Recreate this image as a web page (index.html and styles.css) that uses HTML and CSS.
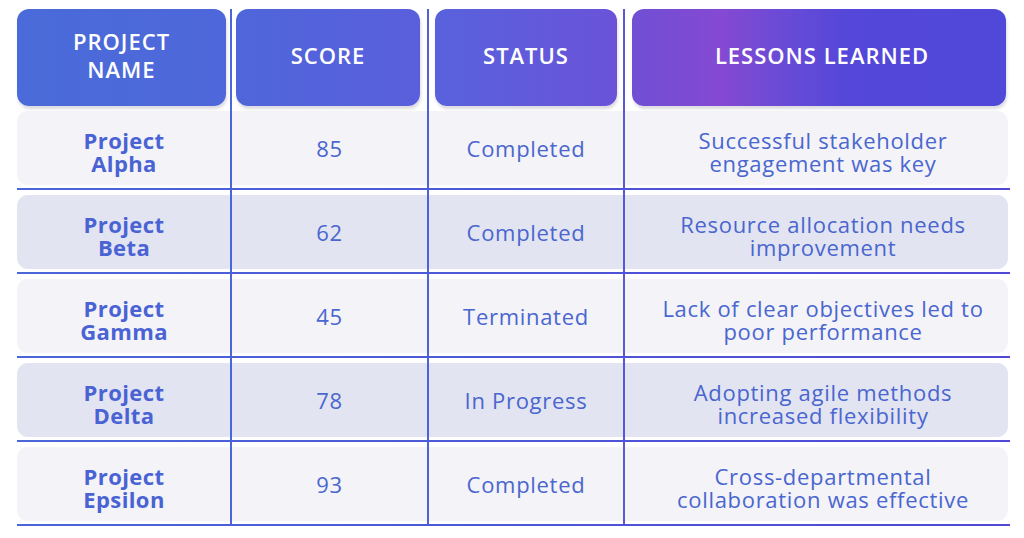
FILE: index.html
```html
<!DOCTYPE html>
<html lang="en">
<head>
<meta charset="utf-8">
<title>Project Lessons</title>
<link rel="stylesheet" href="styles.css">
</head>
<body>
<div class="table">
  <div class="head">
    <div class="hcell h1">PROJECT<br>NAME</div>
    <div class="hcell h2">SCORE</div>
    <div class="hcell h3">STATUS</div>
    <div class="hcell h4">LESSONS LEARNED</div>
  </div>
  <div class="row">
    <div class="band odd">
      <div class="cell name two">Project<br>Alpha</div>
      <div class="cell">85</div>
      <div class="cell">Completed</div>
      <div class="cell lesson two">Successful stakeholder<br>engagement was key</div>
    </div>
  </div>
  <div class="row">
    <div class="band even">
      <div class="cell name two">Project<br>Beta</div>
      <div class="cell">62</div>
      <div class="cell">Completed</div>
      <div class="cell lesson two">Resource allocation needs<br>improvement</div>
    </div>
  </div>
  <div class="row">
    <div class="band odd">
      <div class="cell name two">Project<br>Gamma</div>
      <div class="cell">45</div>
      <div class="cell">Terminated</div>
      <div class="cell lesson two">Lack of clear objectives led to<br>poor performance</div>
    </div>
  </div>
  <div class="row">
    <div class="band even">
      <div class="cell name two">Project<br>Delta</div>
      <div class="cell">78</div>
      <div class="cell">In Progress</div>
      <div class="cell lesson two">Adopting agile methods<br>increased flexibility</div>
    </div>
  </div>
  <div class="row">
    <div class="band odd">
      <div class="cell name two">Project<br>Epsilon</div>
      <div class="cell">93</div>
      <div class="cell">Completed</div>
      <div class="cell lesson two">Cross-departmental<br>collaboration was effective</div>
    </div>
  </div>
</div>
</body>
</html>
```

FILE: styles.css
```css
html, body {
  margin: 0;
  padding: 0;
  background: #ffffff;
}

body {
  font-family: "Open Sans", "DejaVu Sans", sans-serif;
}

.table {
  width: 993px;
  margin: 9px 0 0 17px;
  background-image:
    linear-gradient(90deg, transparent 213px, #4a66d8 213px, #4a66d8 215px, transparent 215px),
    linear-gradient(90deg, transparent 410px, #4f60d8 410px, #4f60d8 412px, transparent 412px),
    linear-gradient(90deg, transparent 606px, #5a56d8 606px, #5a56d8 608px, transparent 608px);
}

.head {
  display: grid;
  grid-template-columns: 214px 197px 196px 386px;
  height: 97px;
}

.hcell {
  display: flex;
  align-items: center;
  justify-content: center;
  text-align: center;
  color: #ffffff;
  font-weight: 600;
  font-size: 22px;
  line-height: 28px;
  letter-spacing: 1px;
  padding-bottom: 5px;
  border-radius: 12px;
  box-shadow: 1px 3px 3px rgba(60, 60, 90, 0.18);
}

.h1 {
  margin: 0 5px 0 0;
  background: linear-gradient(90deg, #4a6bd9, #4e67da);
}
.h2 {
  margin: 0 8px 0 5px;
  background: linear-gradient(90deg, #4f66da, #5a5fdc);
}
.h3 {
  margin: 0 7px 0 7px;
  background: linear-gradient(90deg, #5862dc, #6a53d9);
}
.h4 {
  margin: 0 4px 0 8px;
  padding-left: 6px;
  background: linear-gradient(90deg, #704fd5 0%, #8549d2 24%, #6a4bd6 40%, #5447d9 58%, #5048d9 100%);
}

.row {
  padding: 5px 2px 3px 0;
  border-bottom: 2px solid transparent;
  border-image: linear-gradient(90deg, #4a66d8, #5048d8) 1;
}

.band {
  display: grid;
  grid-template-columns: 214px 197px 196px 384px;
  height: 74px;
  border-radius: 11px;
}

.band.odd {
  background:
    linear-gradient(90deg, transparent 213px, #4a66d8 213px, #4a66d8 215px, transparent 215px),
    linear-gradient(90deg, transparent 410px, #4f60d8 410px, #4f60d8 412px, transparent 412px),
    linear-gradient(90deg, transparent 606px, #5a56d8 606px, #5a56d8 608px, transparent 608px),
    #f3f3f8;
}

.band.even {
  background:
    linear-gradient(90deg, transparent 213px, #4a66d8 213px, #4a66d8 215px, transparent 215px),
    linear-gradient(90deg, transparent 410px, #4f60d8 410px, #4f60d8 412px, transparent 412px),
    linear-gradient(90deg, transparent 606px, #5a56d8 606px, #5a56d8 608px, transparent 608px),
    #e2e4f1;
}

.cell {
  display: flex;
  align-items: center;
  justify-content: center;
  text-align: center;
  color: #4a66cf;
  font-size: 22px;
  font-weight: 500;
  line-height: 23px;
  letter-spacing: 0.7px;
}

.cell.two {
  padding-top: 7px;
}

.cell.name {
  font-weight: 700;
  letter-spacing: 0.4px;
  color: #4a63d4;
}

.cell.lesson {
  padding-left: 14px;
}
```
